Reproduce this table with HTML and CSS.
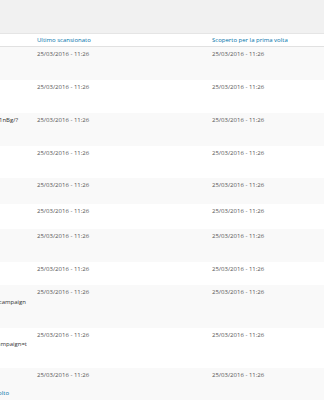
FILE: index.html
```html
<!DOCTYPE html>
<html lang="it">
<head>
<meta charset="utf-8">
<title>404</title>
<link rel="stylesheet" href="styles.css">
</head>
<body>
<div class="topbar"></div>
<div class="table">
  <div class="row head">
    <div class="c1"></div>
    <div class="c2"><a class="sort">Ultimo scansionato</a></div>
    <div class="c3"><a class="sort">Scoperto per la prima volta</a></div>
  </div>
  <div class="row alt h33">
    <div class="c1"></div>
    <div class="c2">25/03/2016 - 11:26</div>
    <div class="c3">25/03/2016 - 11:26</div>
  </div>
  <div class="row h33">
    <div class="c1"></div>
    <div class="c2">25/03/2016 - 11:26</div>
    <div class="c3">25/03/2016 - 11:26</div>
  </div>
  <div class="row alt h33">
    <div class="c1"><div class="ln pr9">?utm_content=1nBg/?</div></div>
    <div class="c2">25/03/2016 - 11:26</div>
    <div class="c3">25/03/2016 - 11:26</div>
  </div>
  <div class="row h32">
    <div class="c1"></div>
    <div class="c2">25/03/2016 - 11:26</div>
    <div class="c3">25/03/2016 - 11:26</div>
  </div>
  <div class="row alt h26">
    <div class="c1"></div>
    <div class="c2">25/03/2016 - 11:26</div>
    <div class="c3">25/03/2016 - 11:26</div>
  </div>
  <div class="row h25">
    <div class="c1"></div>
    <div class="c2">25/03/2016 - 11:26</div>
    <div class="c3">25/03/2016 - 11:26</div>
  </div>
  <div class="row alt h33">
    <div class="c1"></div>
    <div class="c2">25/03/2016 - 11:26</div>
    <div class="c3">25/03/2016 - 11:26</div>
  </div>
  <div class="row h23">
    <div class="c1"></div>
    <div class="c2">25/03/2016 - 11:26</div>
    <div class="c3">25/03/2016 - 11:26</div>
  </div>
  <div class="row alt h43">
    <div class="c1"><div class="ln">&nbsp;</div><div class="ln wide pr1">utm_campaign</div></div>
    <div class="c2">25/03/2016 - 11:26</div>
    <div class="c3">25/03/2016 - 11:26</div>
  </div>
  <div class="row h40">
    <div class="c1"><div class="ln">&nbsp;</div><div class="ln tight">utm_campaign=t</div></div>
    <div class="c2">25/03/2016 - 11:26</div>
    <div class="c3">25/03/2016 - 11:26</div>
  </div>
  <div class="row alt last">
    <div class="c1"><div class="ln">&nbsp;</div><div class="ln">&nbsp;</div><div class="ln act pr18"><a>Risolto</a></div></div>
    <div class="c2">25/03/2016 - 11:26</div>
    <div class="c3">25/03/2016 - 11:26</div>
  </div>
</div>
</body>
</html>
```
FILE: styles.css
```css
html, body {
  margin: 0;
  padding: 0;
}
body {
  background: #f1f1f1;
  font-family: "Open Sans", "Liberation Sans", sans-serif;
  font-size: 6px;
  color: #555;
  overflow: hidden;
}
.topbar {
  height: 33px;
}
.table {
  background: #fff;
  border-top: 1px solid #e5e5e5;
}
.row {
  display: flex;
  box-sizing: border-box;
  line-height: 9px;
}
.row.alt {
  background: #f9f9f9;
}
.row.head {
  height: 13px;
  line-height: 13px;
  border-bottom: 1px solid #e1e1e1;
  background: #fff;
}
.head .c1, .head .c2, .head .c3 {
  padding-top: 0;
}
.sort {
  color: #0073aa;
  text-decoration: none;
}
.c1 {
  width: 27px;
  flex: none;
  overflow: hidden;
  padding-top: 3px;
  color: #333;
}
.c2 {
  width: 165px;
  flex: none;
  padding: 3px 0 0 10px;
  white-space: nowrap;
}
.c3 {
  flex: 1;
  padding: 3px 0 0 10px;
  white-space: nowrap;
}
.ln {
  display: flex;
  justify-content: flex-end;
  white-space: nowrap;
}
.ln.wide { line-height: 11px; }
.ln.tight { line-height: 8px; }
.ln.act { line-height: 8px; }
.ln.act a { color: #0073aa; text-decoration: none; }
.pr1 { padding-right: 1px; }
.pr9 { padding-right: 9px; }
.pr18 { padding-right: 18px; }
.h23 { height: 23px; }
.h25 { height: 25px; }
.h26 { height: 26px; }
.h32 { height: 32px; }
.h33 { height: 33px; }
.h40 { height: 40px; }
.h43 { height: 43px; }
.last { height: 40px; }
```
